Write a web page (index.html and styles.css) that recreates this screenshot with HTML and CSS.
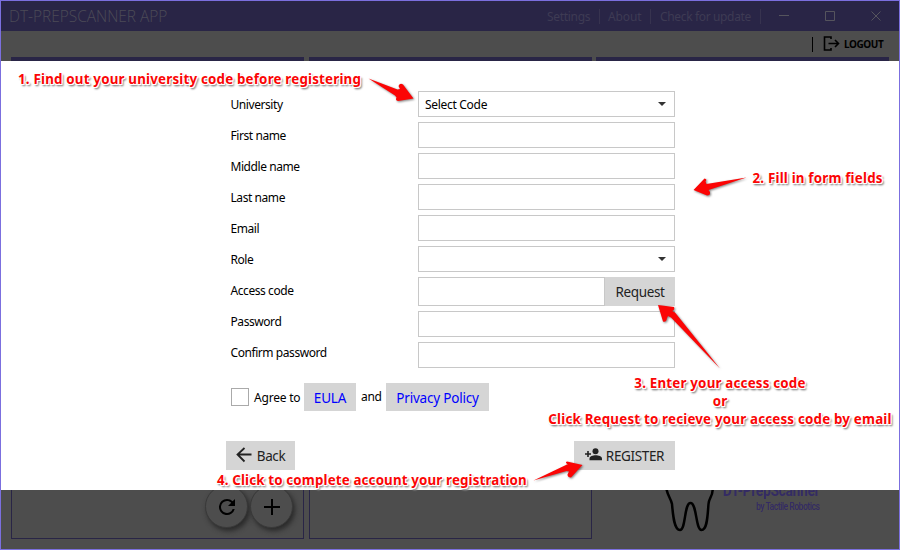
FILE: index.html
```html
<!DOCTYPE html>
<html lang="en">
<head>
<meta charset="utf-8">
<title>DT-PrepScanner App</title>
<link rel="stylesheet" href="styles.css">
</head>
<body>
<div class="window">
  <header class="titlebar">
    <div class="title">DT-PREPSCANNER APP</div>
    <nav class="menu">
      <span class="menu-item settings">Settings</span>
      <span class="menu-item about">About</span>
      <span class="menu-item update">Check for update</span>
    </nav>
    <svg class="controls" width="138" height="30" viewBox="0 0 138 30"><path d="M18 14.500h10M64.500 10.500h9v9h-9zM110.500 10.500l9 9m0-9l-9 9"/></svg>
  </header>
  <div class="toolbar">
    <span class="divider"></span>
    <svg class="logout-icon" width="17" height="16" viewBox="0 0 17 16"><path d="M8 3V1H1.500v13H8v-2M5.500 7.500h10M12 4l3.500 3.500L12 11"/></svg>
    <span class="logout">LOGOUT</span>
  </div>
  <main class="panels">
    <section class="panel">
      <div class="round-buttons">
        <span class="round"><svg width="24" height="24" viewBox="0 0 24 24"><path d="M17.650 6.350A7.960 7.960 0 0 0 12 4a8 8 0 1 0 7.730 10h-2.080A6 6 0 1 1 12 6c1.660 0 3.140.69 4.220 1.780L13 11h7V4z"/></svg></span>
        <span class="round"><svg width="24" height="24" viewBox="0 0 24 24"><path d="M11 4h2v7h7v2h-7v7h-2v-7H4v-2h7z"/></svg></span>
      </div>
    </section>
    <section class="panel"></section>
    <section class="panel brand-panel">
      <svg class="tooth" width="54" height="66" viewBox="0 0 54 66"><path d="M10 1C3 4 1 13 5 24c1 5 4 8 5 13 1 11 2 26 8 26 6 0 4-27 10.500-27s5 27 11 27 6-15 7-26c0-5 4-8 4-13 3-12 1-20-6-23-6-3-11 3-17 3S16-1 10 1z"/></svg>
      <div class="brand"><div class="brand-name">DT-PrepScanner</div><div class="brand-by">by Tactile Robotics</div></div>
    </section>
  </main>

  <div class="dialog">
    <form class="form">
      <div class="fields">
        <div class="labels">
          <label>University</label><label>First name</label><label>Middle name</label><label>Last name</label><label>Email</label><label>Role</label><label>Access code</label><label>Password</label><label>Confirm password</label>
        </div>
        <div class="inputs">
          <div class="field select"><span class="value">Select Code</span><i class="caret"></i></div>
          <div class="field"></div>
          <div class="field"></div>
          <div class="field"></div>
          <div class="field"></div>
          <div class="field select"><span></span><i class="caret"></i></div>
          <div class="access"><div class="field"></div><div class="button request"><span>Request</span></div></div>
          <div class="field"></div>
          <div class="field"></div>
        </div>
      </div>
      <div class="agree">
        <span class="checkbox"></span>
        <span class="agree-text">Agree to</span>
        <div class="button eula">EULA</div>
        <span class="and">and</span>
        <div class="button policy">Privacy Policy</div>
      </div>
      <div class="actions">
        <div class="button back"><svg width="16" height="16" viewBox="0 0 16 16"><path class="line" d="M15.500 7.500H1.500M8.500 1L1.500 7.500l7 7"/></svg><span>Back</span></div>
        <div class="button register"><svg width="17" height="13" viewBox="0 0 17 13"><path d="M2.200 3h1.600v2.200H6v1.600H3.800V9H2.200V6.800H0V5.200h2.200z"/><circle cx="10.500" cy="3.200" r="3"/><path d="M4.500 12.200V10.500C4.500 8 8 7.200 10.700 7.200S17 8 17 10.500v1.700z"/></svg><span>REGISTER</span></div>
      </div>
    </form>
  </div>
</div>

<svg class="arrows" width="900" height="550" viewBox="0 0 900 550">
  <path d="M368.500 78.500L395 95.500 396.500 97.500Q395 100.500 398 101L413.500 98.500 403 84.500Q400 82.500 398.500 86L400 89 397.500 89.500z"/>
  <path d="M746.500 177.500L706.500 184 705.500 181.500Q707.500 179 704.500 178.500L693.500 190 707 195.500Q710.500 195.500 710 192L708.500 190z"/>
  <path d="M720 368.500L675 312.500 672 311Q675 310 674 307L658 305 663 321.500Q666.500 322.500 667 318L668 316 671 317.500z"/>
  <path d="M533.500 480.500L567 464.500 568 464.500Q564.500 462.500 567 461.500L582.500 465 571 477.500Q567.500 477.500 567.500 474.500L569 471.500 566.500 471z"/>
</svg>
<div class="note note-code">1. Find out your university code before registering</div>
<div class="note note-fields">2. Fill in form fields</div>
<div class="note note-access"><div>3. Enter your access code</div><div>or</div><div>Click Request to recieve your access code by email</div></div>
<div class="note note-register">4. Click to complete account your registration</div>
</body>
</html>
```
FILE: styles.css
```css
* { box-sizing: border-box; }
body { margin: 0; width: 900px; height: 550px; overflow: hidden; position: relative; font-family: "Noto Sans", sans-serif; font-size: 12px; color: #000; }
.window { width: 900px; height: 550px; border: 1px solid #7b6fdf; background: #4d4d4d; display: flex; flex-direction: column; position: relative; }
.titlebar { height: 30px; background: #292546; display: flex; align-items: center; color: #4c4b57; flex: none; }
.title { flex: 1; padding-left: 8px; font-family: "Open Sans", sans-serif; font-size: 15.500px; font-weight: 300; letter-spacing: -.03px; white-space: nowrap; }
.menu { display: flex; line-height: 15px; color: #3e3b54; letter-spacing: -.3px; }
.menu-item { border-right: 1px solid #37334f; white-space: nowrap; }
.settings { width: 53px; }
.about { width: 51px; padding-left: 8px; letter-spacing: -.1px; }
.update { width: 110px; padding-left: 9px; letter-spacing: -.35px; }
.controls { fill: none; stroke: #55545d; stroke-width: 1; flex: none; }
.toolbar { height: 26px; display: flex; align-items: center; justify-content: flex-end; padding-right: 14px; flex: none; }
.divider { width: 1px; height: 15px; background: #000; margin-right: 10px; }
.logout-icon { fill: none; stroke: #000; stroke-width: 1.600; margin-right: 4px; }
.logout { font-size: 10px; font-weight: 700; width: 41px; letter-spacing: -.4px; }
.panels { flex: 1; display: grid; grid-template-columns: 293px 284px 293px; column-gap: 4px; padding: 0 10px 10px; }
.panel { border: 1px solid #292546; border-top-width: 4px; display: flex; align-items: flex-end; }
.panel:first-child { justify-content: flex-end; }
.panel:nth-child(2) { margin-left: 1px; }
.round-buttons { display: flex; gap: 2px; padding: 0 10px 10px 0; }
.round { width: 43px; height: 43px; border-radius: 50%; border: 1px solid #393939; box-shadow: 2px 3px 5px #292929; display: flex; align-items: center; justify-content: center; background: #4d4d4d; }
.panel.brand-panel { border-width: 4px 0 0; padding: 0 0 6px 66px; }
.tooth { fill: none; stroke: #000; stroke-width: 2.500; flex: none; }
.brand { color: #342b64; font-family: Roboto, sans-serif; font-weight: 700; padding: 0 0 20px 7px; text-align: right; white-space: nowrap; transform: scaleX(.8); transform-origin: 7px 0; }
.brand-name { font-size: 17px; line-height: 20px; letter-spacing: -.25px; }
.brand-by { font-size: 10.500px; line-height: 13px; letter-spacing: -.5px; font-weight: 500; }

.dialog { position: absolute; inset: 60px 0 59px; background: #fff; }
.form { padding: 30px 0 0 225px; width: 674px; }
.fields { display: flex; justify-content: space-between; padding-left: 4.500px; }
.labels { display: flex; flex-direction: column; }
.labels label { height: 31px; line-height: 27px; letter-spacing: -.43px; }
.inputs { width: 257px; display: flex; flex-direction: column; gap: 5px; }
.field { height: 26px; border: 1px solid #c8c8c8; display: flex; align-items: center; flex: none; }
.select { justify-content: space-between; padding: 0 8px 0 6px; letter-spacing: -.3px; }
.caret { border: 4px solid transparent; border-top-color: #333; border-bottom: 0; }
.access { display: flex; height: 29px; }
.access .field { height: 29px; flex: 1; border-right: 0; }
.button { background: #d5d5d5; color: #222; display: flex; align-items: center; justify-content: center; font-size: 13.500px; white-space: nowrap; }
.request { width: 71px; border-left: 1px solid #c8c8c8; letter-spacing: -.35px; }
.agree { display: flex; height: 28px; margin-top: 13px; padding-left: 5px; }
.checkbox { width: 18px; height: 18px; border: 1px solid #aaa; margin: 5px 5px 0 0; }
.agree-text { width: 50px; line-height: 30px; white-space: nowrap; letter-spacing: -.2px; }
.eula, .policy { color: #00f; letter-spacing: -.2px; padding-top: 2px; }
.eula { width: 52px; }
.and { width: 30px; padding-left: 5px; line-height: 28px; letter-spacing: -.3px; }
.policy { width: 103px; }
.actions { display: flex; justify-content: space-between; margin-top: 30px; }
.actions .button { height: 29px; }
.actions svg { fill: #222; margin-bottom: 2px; }
.actions .line { fill: none; stroke: #222; stroke-width: 1.800; }
.back { width: 69px; gap: 5px; letter-spacing: -.4px; }
.register { width: 101px; gap: 4px; letter-spacing: -.35px; }

.arrows { position: absolute; left: 0; top: 0; fill: #fb0505; filter: drop-shadow(1px 1px 1px rgba(0,0,0,.5)); }
.note { position: absolute; color: #fb0505; font-weight: 700; font-size: 13.333px; letter-spacing: .2px; line-height: 18px; white-space: nowrap; text-shadow: -1px -1px 0 #fff, 1px -1px 0 #fff, -1px 1px 0 #fff, 1px 1px 0 #fff, 0 1px 0 #fff, 1px 2px 2px #888, 2px 2px 2px #999; }
.note-code { left: 18px; top: 70px; }
.note-fields { left: 752.500px; top: 169px; }
.note-access { left: 548px; top: 374px; width: 344px; display: flex; flex-direction: column; align-items: center; }
.note-register { left: 217px; top: 471px; letter-spacing: .15px; }
```
